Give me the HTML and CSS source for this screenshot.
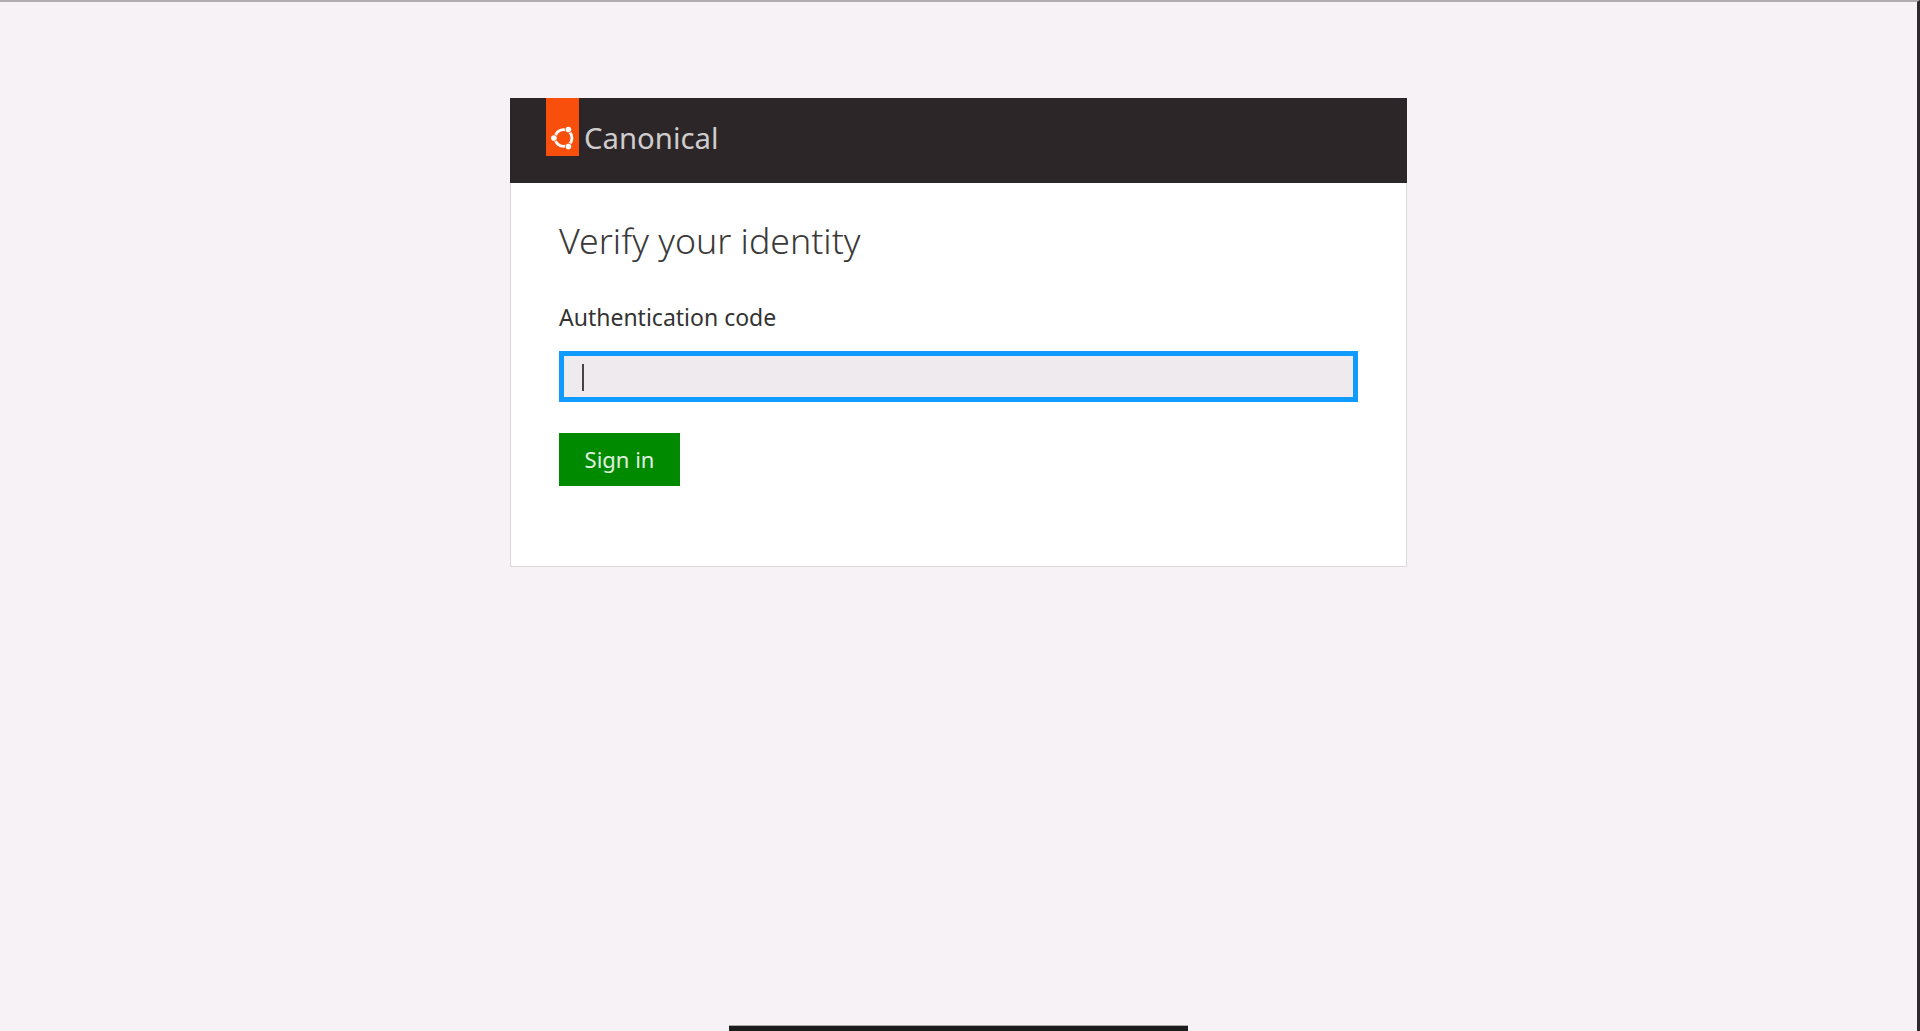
FILE: index.html
```html
<!DOCTYPE html>
<html lang="en">
<head>
    <meta charset="UTF-8">
    <title>Verify your identity</title>
    <link rel="stylesheet" href="styles.css">
</head>
<body>
    <main class="page">
        <div class="card">
            <!-- Brand header -->
            <header class="card-header">
                <div class="logo-tag">
                    <svg class="logo-mark" viewBox="0 0 24 24" width="26" height="26" aria-hidden="true">
                        <circle cx="12.5" cy="12" r="7.8" fill="none" stroke="#fff" stroke-width="2.6"/>
                        <g fill="#f8500c">
                            <circle cx="3.6" cy="12" r="3.3"/>
                            <circle cx="17" cy="4.2" r="3.3"/>
                            <circle cx="17" cy="19.8" r="3.3"/>
                        </g>
                        <g fill="#fff">
                            <circle cx="3.6" cy="12" r="2.6"/>
                            <circle cx="17" cy="4.2" r="2.6"/>
                            <circle cx="17" cy="19.8" r="2.6"/>
                        </g>
                    </svg>
                </div>
                <span class="brand-name">Canonical</span>
            </header>

            <!-- Code form -->
            <form class="card-body">
                <h1 class="title">Verify your identity</h1>
                <label class="field-label" for="code">Authentication code</label>
                <div class="field">
                    <input class="field-input" id="code" type="text">
                    <span class="caret"></span>
                </div>
                <button class="signin-btn" type="button">Sign in</button>
            </form>
        </div>
    </main>
    <div class="bottom-bar"></div>
</body>
</html>
```

FILE: styles.css
```css
html, body {
    height: 100%;
}

body {
    margin: 0;
    box-sizing: border-box;
    display: flex;
    flex-direction: column;
    background-color: #f7f2f6;
    border-top: 2px solid #b0acb0;
    border-right: 3px solid #2c2a2c;
    font-family: "Noto Sans", "Open Sans", sans-serif;
    overflow: hidden;
}

.page {
    flex: 1;
    padding: 96px 510px 0 510px;
}

.card {
    width: 897px;
    height: 469px;
    box-sizing: border-box;
    background-color: #fff;
    border: 1px solid #dcd9dc;
    border-top: none;
}

.card-header {
    height: 85px;
    margin: 0 -1px;
    padding-left: 36px;
    display: flex;
    align-items: flex-start;
    background-color: #2c2629;
}

.logo-tag {
    width: 33px;
    height: 58px;
    display: flex;
    align-items: flex-end;
    justify-content: center;
    padding-bottom: 5px;
    box-sizing: border-box;
    background-color: #f8500c;
}

.brand-name {
    margin: 20px 0 0 5px;
    font-size: 29.3px;
    line-height: 40px;
    color: #cfcccd;
}

.card-body {
    padding: 32px 48px 0 48px;
}

.title {
    margin: 0;
    font-size: 35.7px;
    line-height: 50px;
    font-weight: 300;
    color: #3a3a3a;
}

.field-label {
    display: block;
    margin-top: 36px;
    font-size: 23px;
    line-height: 32px;
    color: #333;
}

.field {
    position: relative;
    margin-top: 18px;
}

.field-input {
    display: block;
    width: 100%;
    height: 51px;
    box-sizing: border-box;
    background-color: #efeaee;
    border: 5px solid #0f9bff;
    border-radius: 0;
    outline: none;
}

.caret {
    position: absolute;
    left: 23px;
    top: 13px;
    width: 2px;
    height: 27px;
    background-color: #444;
}

.signin-btn {
    display: block;
    margin-top: 31px;
    width: 121px;
    height: 53px;
    padding-bottom: 3px;
    background-color: #008a00;
    border: none;
    border-radius: 0;
    font-family: inherit;
    font-size: 22px;
    color: #e0f0e0;
}

.bottom-bar {
    align-self: center;
    width: 459px;
    height: 6px;
    background-color: #1c1c1c;
    border-top: 1px solid #aaa;
    box-sizing: border-box;
}
```
